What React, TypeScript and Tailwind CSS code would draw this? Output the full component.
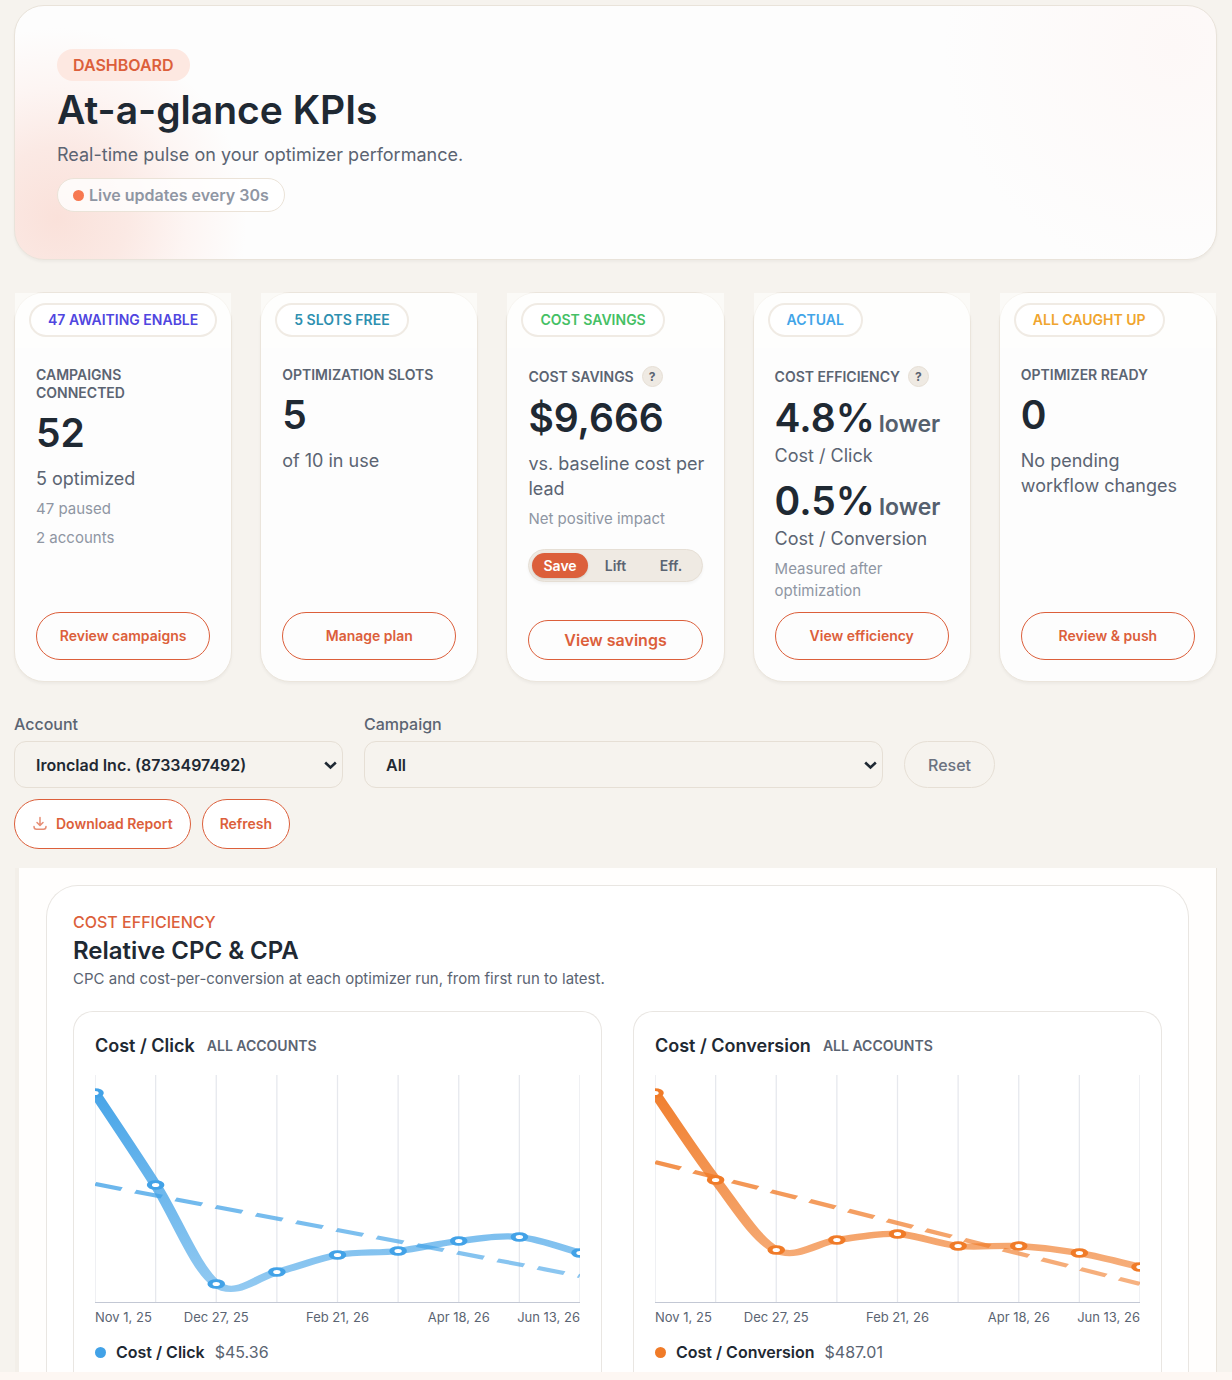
import { ReactNode, useState } from "react";

type Kpi = {
  badge: string;
  badgeColor: string;
  label: string;
  help?: boolean;
  cta: string;
  ctaStyle?: string;
  body: ReactNode;
};

const Value = ({ children, suffix }: { children: ReactNode; suffix?: string }) => (
  <p className="text-[39px] leading-[50px] font-semibold whitespace-nowrap text-[#1f2933]">
    {children}
    {suffix && <span className="ml-1 text-[23px] leading-none text-[#55606e]">{suffix}</span>}
  </p>
);

const Sub = ({ children }: { children: ReactNode }) => (
  <p className="text-lg leading-[25px] text-[#5b6472]">{children}</p>
);

const Note = ({ children }: { children: ReactNode }) => (
  <p className="mt-[7px] text-[15px] leading-[22px] text-[#8f96a3]">{children}</p>
);

const SavingsToggle = () => {
  const [mode, setMode] = useState("Save");
  return (
    <div className="mt-[19px] grid grid-cols-3 rounded-full border border-[#e6dfd5] bg-[#efeae3] p-[3px] shadow-[0_2px_3px_#0000000a]">
      {["Save", "Lift", "Eff."].map((item) => (
        <button
          key={item}
          type="button"
          onClick={() => setMode(item)}
          className={
            item === mode
              ? "rounded-full bg-[#dc5f3b] text-sm leading-[25px] font-semibold text-white shadow-sm"
              : "rounded-full text-sm leading-[25px] font-semibold text-[#5b6472]"
          }
        >
          {item}
        </button>
      ))}
    </div>
  );
};

const kpis: Kpi[] = [
  {
    badge: "47 AWAITING ENABLE",
    badgeColor: "text-[#5046e0]",
    label: "CAMPAIGNS CONNECTED",
    cta: "Review campaigns",
    body: (
      <>
        <Value>52</Value>
        <div className="mt-2">
          <Sub>5 optimized</Sub>
        </div>
        <Note>47 paused</Note>
        <Note>2 accounts</Note>
      </>
    ),
  },
  {
    badge: "5 SLOTS FREE",
    badgeColor: "text-[#2e90b0]",
    label: "OPTIMIZATION SLOTS",
    cta: "Manage plan",
    body: (
      <>
        <Value>5</Value>
        <div className="mt-2">
          <Sub>of 10 in use</Sub>
        </div>
      </>
    ),
  },
  {
    badge: "COST SAVINGS",
    badgeColor: "text-[#45c065]",
    label: "COST SAVINGS",
    help: true,
    cta: "View savings",
    ctaStyle: "h-10 text-base",
    body: (
      <>
        <Value>$9,666</Value>
        <div className="mt-2 -mr-2">
          <Sub>vs. baseline cost per lead</Sub>
        </div>
        <Note>Net positive impact</Note>
        <SavingsToggle />
      </>
    ),
  },
  {
    badge: "ACTUAL",
    badgeColor: "text-[#42a5e8]",
    label: "COST EFFICIENCY",
    help: true,
    cta: "View efficiency",
    body: (
      <>
        <Value suffix="lower">4.8%</Value>
        <Sub>Cost / Click</Sub>
        <div className="mt-2">
          <Value suffix="lower">0.5%</Value>
          <Sub>Cost / Conversion</Sub>
        </div>
        <Note>Measured after optimization</Note>
      </>
    ),
  },
  {
    badge: "ALL CAUGHT UP",
    badgeColor: "text-[#f0a52e]",
    label: "OPTIMIZER READY",
    cta: "Review & push",
    body: (
      <>
        <Value>0</Value>
        <div className="mt-2">
          <Sub>No pending workflow changes</Sub>
        </div>
      </>
    ),
  },
];

const KpiCard = ({ kpi }: { kpi: Kpi }) => (
  <article className="flex min-h-[390px] flex-col rounded-[30px] border border-[#ebe5dc] bg-[#fdfdfd] shadow-[0_2px_3px_#0000000a]">
    {/* Square header strip, sits over the rounded corners */}
    <div className="h-[55px] bg-[#fffffe]/60 px-[14px] pt-[10px]">
      <span
        className={`inline-block rounded-full border-2 border-[#f0ebe4] bg-white px-[17px] text-sm leading-[30px] font-semibold whitespace-nowrap ${kpi.badgeColor}`}
      >
        {kpi.badge}
      </span>
    </div>
    <div className="flex flex-1 flex-col px-[21px] pt-[18px] pb-[21px]">
      <h2 className="mb-[6px] flex items-center gap-2 text-sm leading-[18px] font-semibold text-[#5b6472]">
        {kpi.label}
        {kpi.help && (
          <button
            type="button"
            aria-label={`About ${kpi.label}`}
            className="h-[21px] w-[21px] rounded-full border border-[#e6dfd5] bg-[#efeae3] text-xs font-bold"
          >
            ?
          </button>
        )}
      </h2>
      {kpi.body}
      <button
        type="button"
        className={`mt-auto w-full rounded-full border border-[#dc5f3b] font-semibold text-[#dc5f3b] ${kpi.ctaStyle ?? "h-12 text-sm"}`}
      >
        {kpi.cta}
      </button>
    </div>
  </article>
);

const Dropdown = ({ label, options }: { label: string; options: string[] }) => (
  <label className="block leading-6 font-medium text-[#5b6472]">
    {label}
    <span className="relative mt-[5px] block">
      <select className="block h-[47px] w-full appearance-none rounded-xl border border-[#e6dfd5] bg-transparent px-[21px] text-base font-semibold text-[#1f2933]">
        {options.map((option) => (
          <option key={option}>{option}</option>
        ))}
      </select>
      <svg
        className="pointer-events-none absolute top-5 right-[6px] h-[9px] w-[13px]"
        viewBox="0 0 13 9"
        fill="none"
        stroke="#1f2933"
        strokeWidth="2.6"
      >
        <path d="M1.2 1.5 6.5 6.5l5.3-5" />
      </svg>
    </span>
  </label>
);

// The plot is drawn in a narrow box and stretched sideways to fill its card
const STEP = 33;
const PLOT_WIDTH = STEP * 8;
const PLOT_HEIGHT = 228;

const smoothPath = (ys: number[]) => {
  const pts = ys.map((y, i) => [i * STEP, y]);
  let d = `M${pts[0][0]},${pts[0][1]}`;
  for (let i = 0; i < pts.length - 1; i++) {
    const p0 = pts[i - 1] ?? pts[i];
    const p1 = pts[i];
    const p2 = pts[i + 1];
    const p3 = pts[i + 2] ?? p2;
    d += ` C${p1[0] + (p2[0] - p0[0]) / 6},${p1[1] + (p2[1] - p0[1]) / 6}`;
    d += ` ${p2[0] - (p3[0] - p1[0]) / 6},${p2[1] - (p3[1] - p1[1]) / 6}`;
    d += ` ${p2[0]},${p2[1]}`;
  }
  return d;
};

type ChartProps = {
  id: string;
  title: string;
  amount: string;
  color: string;
  dot: string;
  points: number[];
  trend: [number, number];
};

const ChartCard = ({ id, title, amount, color, dot, points, trend }: ChartProps) => (
  <section className="rounded-t-[20px] border border-b-0 border-[#e9e6e2] px-[21px] pt-[22px] pb-[8px]">
    <div className="flex items-center gap-3">
      <h3 className="text-lg leading-6 font-semibold text-[#1f2933]">{title}</h3>
      <span className="text-sm leading-6 font-semibold text-[#5b6472]">ALL ACCOUNTS</span>
    </div>
    <svg
      className="mt-[17px] h-[228px] w-full"
      viewBox={`0 0 ${PLOT_WIDTH} ${PLOT_HEIGHT}`}
      preserveAspectRatio="none"
      role="img"
      aria-label={`${title} over time`}
    >
      <defs>
        <linearGradient id={id} gradientUnits="userSpaceOnUse" x1="0" y1="0" x2="0" y2={PLOT_HEIGHT}>
          <stop offset="0" stopColor={color} />
          <stop offset="1" stopColor={color} stopOpacity="0.55" />
        </linearGradient>
      </defs>
      {points.map((_, i) => (
        <line key={i} x1={i * STEP} x2={i * STEP} y1="0" y2="227" stroke="#e6e8ed" strokeWidth="0.7" />
      ))}
      <line x1="0" x2={PLOT_WIDTH} y1="227.5" y2="227.5" stroke="#c3c8d4" strokeWidth="1" />
      <line
        x1="0"
        y1={trend[0]}
        x2={PLOT_WIDTH}
        y2={trend[1]}
        stroke={`url(#${id})`}
        strokeWidth="4"
        strokeDasharray="15.3 7.9"
      />
      <path d={smoothPath(points)} fill="none" stroke={`url(#${id})`} strokeWidth="6.3" />
      {points.map((y, i) => (
        <circle key={i} cx={i * STEP} cy={y} r="3.4" fill="#fff" stroke={color} strokeWidth="2.8" />
      ))}
    </svg>
    <div className="mt-1 flex text-[13px] leading-5 whitespace-nowrap text-[#5b6472]">
      <span className="w-1/8">Nov 1, 25</span>
      <span className="w-1/4 text-center">Dec 27, 25</span>
      <span className="w-1/4 text-center">Feb 21, 26</span>
      <span className="w-1/4 text-center">Apr 18, 26</span>
      <span className="flex w-1/8 justify-end">Jun 13, 26</span>
    </div>
    <div className="mt-[13px] flex items-center gap-[10px] leading-6">
      <span className={`h-[11px] w-[11px] rounded-full ${dot}`} />
      <span className="font-semibold text-[#1f2933]">{title}</span>
      <span className="text-[#5b6472]">{amount}</span>
    </div>
  </section>
);

const App = () => {
  return (
    <main className="bg-[#f6f3ee] pt-[5px] font-[Inter,'Liberation_Sans',sans-serif]">
      <div className="pr-[15px] pl-[14px]">
        {/* Hero */}
        <header className="flex min-h-[255px] flex-col items-start rounded-[30px] border border-[#e9e3da] bg-[#fdfdfd] bg-[radial-gradient(circle_at_42px_212px,#fae1da_0,#fbe9e4_70px,#fdf5f3_130px,transparent_190px),radial-gradient(circle_at_calc(100%-42px)_42px,#fdf8f7_0,transparent_230px)] px-[42px] pt-[43px] shadow-[0_2px_3px_#0000000a]">
          <span className="rounded-full bg-[#fde8e1] px-4 text-base leading-8 font-semibold text-[#dc5f3b]">
            DASHBOARD
          </span>
          <h1 className="mt-1 text-[39px] leading-[50px] font-semibold text-[#1f2933]">At-a-glance KPIs</h1>
          <p className="mt-[7px] text-lg leading-[26px] text-[#5b6472]">Real-time pulse on your optimizer performance.</p>
          <span className="mt-[10px] flex items-center gap-[5px] rounded-full border border-[#ebe3d8] bg-white/80 px-[15px] leading-8 font-semibold text-[#8f96a3]">
            <span className="h-[11px] w-[11px] rounded-full bg-[#f77850]" />
            Live updates every 30s
          </span>
        </header>

        <div className="mt-8 grid grid-cols-5 gap-7">
          {kpis.map((kpi) => (
            <KpiCard key={kpi.badge} kpi={kpi} />
          ))}
        </div>

        {/* Filters */}
        <form className="mt-[30px]">
          <div className="grid grid-cols-[329fr_519fr_313fr] items-end gap-[21px]">
            <Dropdown label="Account" options={["Ironclad Inc. (8733497492)"]} />
            <Dropdown label="Campaign" options={["All"]} />
            <button
              type="reset"
              className="h-[47px] justify-self-start rounded-full border border-[#e6dfd5] px-[23px] font-medium text-[#6b7280]"
            >
              Reset
            </button>
          </div>
          <div className="mt-[11px] flex gap-[11px] text-sm font-semibold text-[#dc5f3b]">
            <button
              type="button"
              className="flex h-[50px] items-center gap-2 rounded-full border border-[#dc5f3b] bg-white px-[17px]"
            >
              <svg
                className="h-4 w-4 opacity-70"
                viewBox="0 0 16 16"
                fill="none"
                stroke="currentColor"
                strokeWidth="1.5"
                strokeLinecap="round"
                strokeLinejoin="round"
              >
                <path d="M8 1.5V9M5 6.500l3 3 3-3M2 10.5c0 2 .8 2.800 2.500 2.800h7c1.700 0 2.500-.8 2.500-2.800" />
              </svg>
              Download Report
            </button>
            <button type="button" className="h-[50px] rounded-full border border-[#dc5f3b] bg-white px-[17px]">
              Refresh
            </button>
          </div>
        </form>
      </div>

      {/* Cost efficiency panel */}
      <div className="mx-[15px] mt-[19px] border-l-4 border-[#f3efe9]">
        <div className="border-r border-[#e9e3da] bg-[#fffefd] px-[27px] pt-[17px]">
          <section className="rounded-t-[32px] border border-b-0 border-[#e9e6e2] bg-white px-[26px] pt-6">
            <p className="leading-6 font-medium text-[#dc5f3b]">COST EFFICIENCY</p>
            <h2 className="mt-px text-2xl font-semibold text-[#1f2933]">Relative CPC &amp; CPA</h2>
            <p className="text-[15px] leading-6 text-[#5b6472]">
              CPC and cost-per-conversion at each optimizer run, from first run to latest.
            </p>
            <div className="mt-5 grid grid-cols-2 gap-[31px]">
              <ChartCard
                id="click-line"
                title="Cost / Click"
                amount="$45.36"
                color="#42a2e7"
                dot="bg-[#42a2e7]"
                points={[18, 110, 209, 197, 180, 176, 166, 162, 178]}
                trend={[109, 201]}
              />
              <ChartCard
                id="conversion-line"
                title="Cost / Conversion"
                amount="$487.01"
                color="#f07b28"
                dot="bg-[#f07b28]"
                points={[18, 105, 175, 165, 159, 171, 171, 178, 192]}
                trend={[87, 209]}
              />
            </div>
          </section>
        </div>
      </div>
      <div className="h-2 bg-[#fdf7f3]" />
    </main>
  );
};

export default App;
